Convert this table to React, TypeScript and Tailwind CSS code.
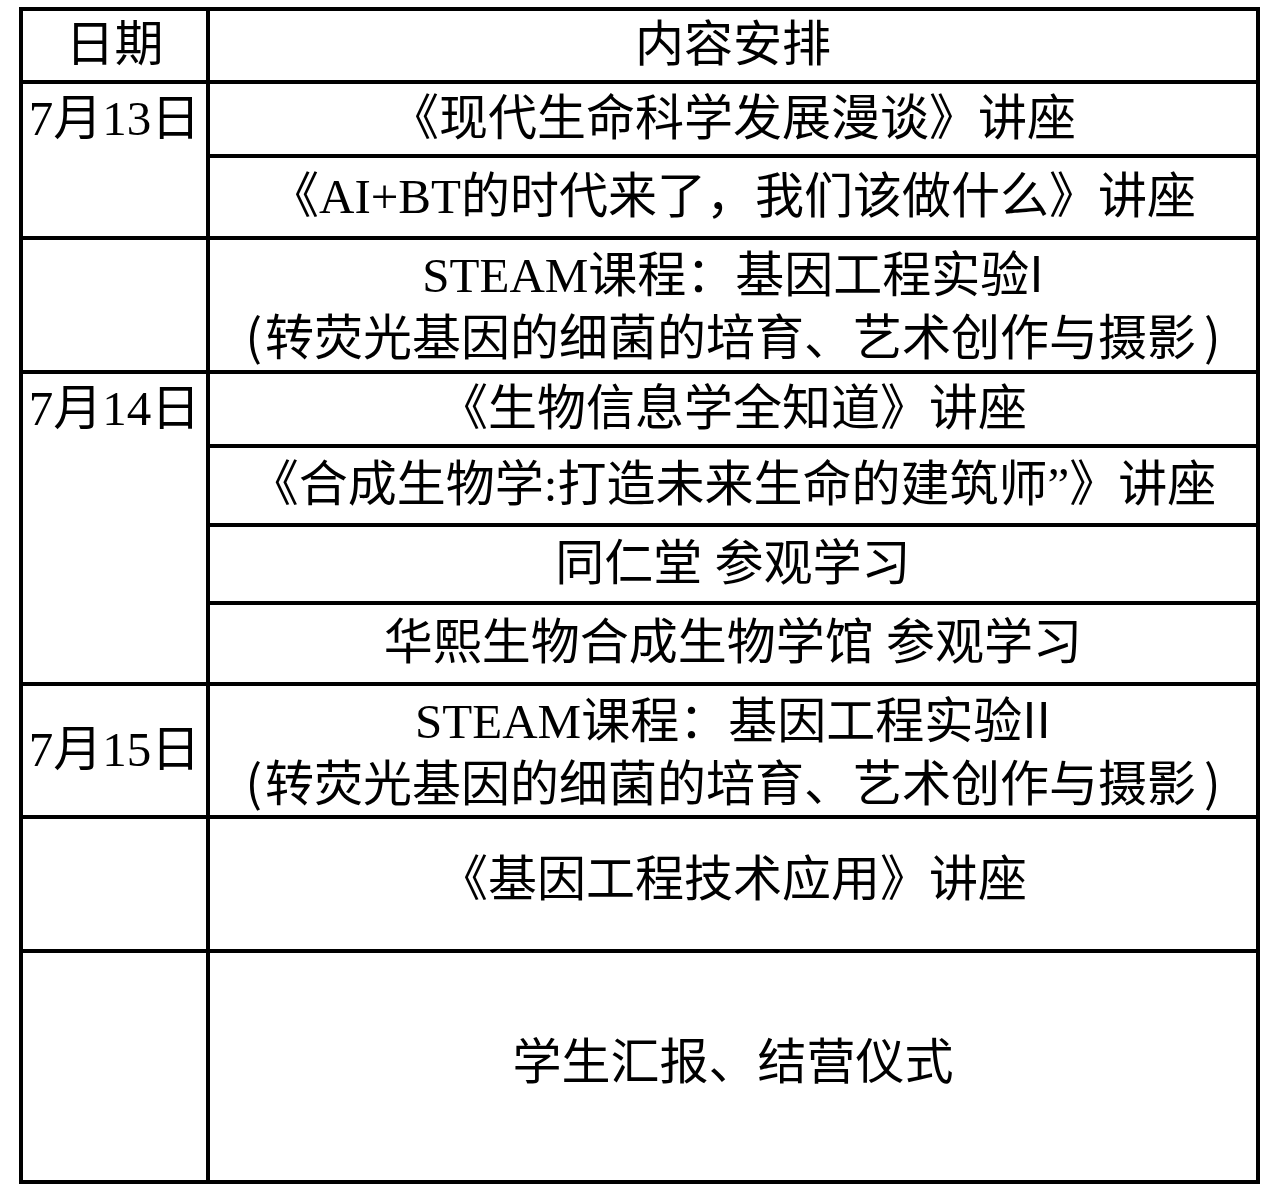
import React from "react";

const font = "font-[family-name:'Liberation_Serif','Noto_Sans_CJK_SC',serif]";

const Cell = ({ className = "", children }: { className?: string; children?: React.ReactNode }) => (
  <div className={`bg-white flex items-center justify-center text-center ${className}`}>{children}</div>
);

const DateCell = ({ className = "", first, children }: { className?: string; first: string; children: React.ReactNode }) => (
  <div className={`bg-white flex flex-col ${className}`}>
    <div className={`${first} flex items-center justify-center whitespace-nowrap`}>{children}</div>
  </div>
);

const Sans = ({ className = "", children }: { className?: string; children: React.ReactNode }) => (
  <span className={`font-[family-name:'Noto_Sans_CJK_SC',sans-serif] ${className}`}>{children}</span>
);

const Steam = ({ n }: { n: string }) => (
  <>
    <div>
      STEAM课程：基因工程实验<Sans>{n}</Sans>
    </div>
    <div className="whitespace-nowrap">
      <Sans className="mr-[3px]">(</Sans>转荧光基因的细菌的培育、艺术创作与摄影<Sans className="ml-[8px]">)</Sans>
    </div>
  </>
);

export default function App() {
  return (
    <div className={`min-h-[1196px] bg-white text-black ${font} text-[49px] leading-[1.2]`}>
      <div className="ml-[19px] pt-[7px]">
        <div className="grid w-[1241px] bg-black p-[4px] gap-[4px] grid-cols-[183px_1046px] grid-rows-[69px_70px_78px_130px_70px_75px_74px_77px_129px_130px_227px]">
          {/* header */}
          <Cell className="col-start-1 row-start-1">日期</Cell>
          <Cell className="col-start-2 row-start-1">内容安排</Cell>

          {/* 7/13 */}
          <DateCell className="col-start-1 row-start-2 row-span-2" first="h-[70px]">
            7月13日
          </DateCell>
          <Cell className="col-start-2 row-start-2">《现代生命科学发展漫谈》讲座</Cell>
          <Cell className="col-start-2 row-start-3">《AI+BT的时代来了，我们该做什么》讲座</Cell>

          <Cell className="col-start-1 row-start-4" />
          <Cell className="col-start-2 row-start-4 flex-col leading-[58px]">
            <Steam n="I" />
          </Cell>

          {/* 7/14 */}
          <DateCell className="col-start-1 row-start-5 row-span-4" first="h-[70px]">
            7月14日
          </DateCell>
          <Cell className="col-start-2 row-start-5">《生物信息学全知道》讲座</Cell>
          <Cell className="col-start-2 row-start-6">《合成生物学:打造未来生命的建筑师”》讲座</Cell>
          <Cell className="col-start-2 row-start-7">同仁堂 参观学习</Cell>
          <Cell className="col-start-2 row-start-8">华熙生物合成生物学馆 参观学习</Cell>

          {/* 7/15 */}
          <Cell className="col-start-1 row-start-9 whitespace-nowrap">7月15日</Cell>
          <Cell className="col-start-2 row-start-9 flex-col leading-[58px]">
            <Steam n="II" />
          </Cell>

          <Cell className="col-start-1 row-start-10" />
          <Cell className="col-start-2 row-start-10 pb-[8px]">《基因工程技术应用》讲座</Cell>

          <Cell className="col-start-1 row-start-11" />
          <Cell className="col-start-2 row-start-11 pb-[6px]">学生汇报、结营仪式</Cell>
        </div>
      </div>
    </div>
  );
}
